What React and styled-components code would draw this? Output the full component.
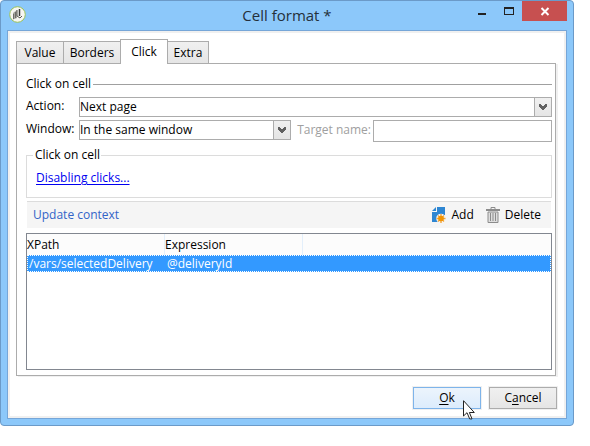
import React from "react";
import styled, { createGlobalStyle } from "styled-components";

const GlobalStyle = createGlobalStyle`
  * { box-sizing: border-box; }
  body {
    margin: 0;
    background: #fff;
    color: #000;
    font: 12px/16px "Open Sans", "Noto Sans", sans-serif;
  }
  button, input, select { font: inherit; color: inherit; margin: 0; }
`;

const Desktop = styled.div`
  padding: 0 16px 20px 0;
`;

const Window = styled.main`
  padding: 0 6px 6px;
  border: 1px solid #6b9ac8;
  border-radius: 4px;
  background: #8cc8fa;
`;

const TitleBar = styled.header`
  display: grid;
  grid-template-columns: 107px 1fr 107px;
  align-items: start;
  height: 29px;
`;

const AppIcon = styled.svg`
  display: block;
  width: 17px;
  height: 17px;
  margin: 5px 0 0 2px;
`;

const Title = styled.h1`
  margin: 3px 0 0;
  color: #24303a;
  font-size: 15px;
  font-weight: 400;
  line-height: 22px;
  text-align: center;
`;

const WindowButtons = styled.div`
  display: flex;
  justify-content: flex-end;
`;

const WindowButton = styled.button`
  display: block;
  flex: none;
  width: ${(p) => (p.$close ? 45 : 27)}px;
  height: 20px;
  padding: 0;
  border: 0;
  background: ${(p) => (p.$close ? "#c75050" : "transparent")};
  svg { display: block; width: 100%; height: 20px; }
`;

const Client = styled.div`
  padding: 8px 7px 5px;
  border: 1px solid #76a6d8;
  background: #fff;
  box-shadow: inset 0 0 0 2px #f0f0f0;
`;

const Tabs = styled.div`
  display: flex;
  align-items: flex-end;
  height: 24px;
  padding-left: 2px;
`;

const Tab = styled.button`
  width: ${(p) => p.$width}px;
  height: ${(p) => (p.$active ? 25 : 23)}px;
  margin: 0 0 -1px -1px;
  padding: 0 0 ${(p) => (p.$active ? 1 : 0)}px;
  border: 1px solid #acacac;
  border-bottom-width: ${(p) => (p.$active ? 0 : 1)}px;
  background: ${(p) => (p.$active ? "#fff" : "linear-gradient(#f0f0f0, #e5e5e5)")};
  position: relative;
`;

const Panel = styled.section`
  margin: 0 3px 0 1px;
  padding: 12px 3px 5px 9px;
  border: 1px solid #acacac;
  box-shadow: 2px 1px 0 #f0f0f0;
`;

const Heading = styled.h2`
  display: flex;
  align-items: center;
  gap: 2px;
  margin: 0 0 5px;
  font-size: 12px;
  font-weight: 400;
  line-height: 16px;
  &::after {
    content: "";
    flex: 1;
    border-top: 1px solid #a0a0a0;
  }
`;

const Form = styled.div`
  display: grid;
  grid-template-columns: 53px 1fr;
  row-gap: 3px;
`;

const Label = styled.label`
  line-height: 18px;
  white-space: nowrap;
`;

const MutedLabel = styled(Label)`
  line-height: 20px;
  color: #a0a0a0;
  text-align: right;
`;

const FieldPair = styled.div`
  display: grid;
  grid-template-columns: 212fr 78px 179fr;
  column-gap: 2px;
  align-items: start;
`;

const SelectBox = styled.div`
  display: grid;
  grid-template-columns: 1fr 17px;
  height: 20px;
  border: 1px solid #acacac;
  background: #fff;
  svg {
    grid-area: 1 / 2;
    width: 17px;
    height: 18px;
    border-left: 1px solid #acacac;
    background: linear-gradient(#f0f0f0, #e5e5e5);
    pointer-events: none;
  }
`;

const Select = styled.select`
  grid-area: 1 / 1 / 2 / 3;
  width: 100%;
  height: 18px;
  padding: 0;
  border: 0;
  background: transparent;
  line-height: 18px;
  appearance: none;
  outline: 0;
`;

const TextInput = styled.input`
  width: 100%;
  height: 22px;
  border: 1px solid #acacac;
  background: #fff;
`;

const Group = styled.fieldset`
  min-width: 0;
  margin: 5px 0 3px;
  padding: 7px 9px 11px;
  border: 1px solid #dcdcdc;
`;

const Legend = styled.legend`
  height: 16px;
  margin-left: -3px;
  padding: 0 1px 0 2px;
`;

const Link = styled.a`
  color: #0000f0;
  text-underline-offset: 2px;
`;

const Toolbar = styled.div`
  display: flex;
  align-items: center;
  gap: 12px;
  height: 27px;
  margin: 0 1px 5px;
  padding: 0 10px 0 6px;
  border-top: 1px solid #dcdcdc;
  background: #f5f5f5;
`;

const ToolbarTitle = styled.h3`
  flex: 1;
  margin: 0;
  color: #3264c8;
  font-size: 12px;
  font-weight: 400;
`;

const ToolButton = styled.button`
  display: flex;
  align-items: center;
  gap: 5px;
  padding: 0;
  border: 0;
  background: none;
  svg { display: block; width: 14px; height: 16px; }
`;

const ListBox = styled.div`
  height: 137px;
  border: 1px solid #828790;
`;

const Table = styled.table`
  width: 100%;
  border-collapse: separate;
  border-spacing: 0;
  table-layout: fixed;
`;

const Column = styled.col`
  width: ${(p) => (p.$width ? `${p.$width}px` : "auto")};
`;

const HeaderCell = styled.th`
  height: 21px;
  padding: 0;
  border-right: ${(p) => (p.$last ? 0 : 1)}px solid #e3effb;
  background: #fcfcfc;
  font-weight: 400;
  text-align: left;
`;

const Row = styled.tr`
  background: #3399ff;
  color: #fff;
  outline: 1px dotted #fff;
  outline-offset: -1px;
`;

const Cell = styled.td`
  height: 17px;
  padding: 0 0 0 2px;
  line-height: 16px;
`;

const Footer = styled.footer`
  display: flex;
  justify-content: flex-end;
  gap: 8px;
  padding: 11px 2px 4px;
`;

const DialogButton = styled.button`
  position: relative;
  width: 68px;
  height: 22px;
  padding: 0;
  border: 1px solid ${(p) => (p.$primary ? "#7eb4ea" : "#acacac")};
  background: ${(p) =>
    p.$primary ? "linear-gradient(#ecf4fc, #dcecfc)" : "linear-gradient(#f0f0f0, #e5e5e5)"};
  box-shadow: 0 0 0 1px #f0f0f0;
  u { text-underline-offset: 2px; }
`;

const Pointer = styled.svg`
  position: absolute;
  top: 12px;
  left: 49px;
  width: 13px;
  height: 20px;
  pointer-events: none;
`;

function Chevron() {
  return (
    <svg viewBox="0 0 16 18" aria-hidden="true">
      <path d="M4 6h2v1h1v1h2V7h1V6h2v3h-1v1h-1v1H9v1H7v-1H6v-1H5V9H4z" fill="#606060" />
    </svg>
  );
}

function Dropdown({ id, value }) {
  return (
    <SelectBox>
      <Chevron />
      <Select id={id} defaultValue={value}>
        <option>{value}</option>
      </Select>
    </SelectBox>
  );
}

function AddIcon() {
  return (
    <svg viewBox="0 0 14 16" aria-hidden="true">
      <path d="M5 0h8v8H7v7H0V5h5z" fill="#2e86d2" />
      <path d="M0 4 4 0v4z" fill="#2e86d2" />
      <circle cx="9" cy="11.5" r="4.8" fill="#f5f5f5" />
      <g stroke="#f2a63c" strokeWidth="1.4">
        <path d="M9 7v9M4.500 11.500h9M6 8.500l6 6M12 8.500l-6 6" />
      </g>
      <circle cx="9" cy="11.500" r="2.800" fill="#f29400" />
    </svg>
  );
}

function TrashIcon() {
  return (
    <svg viewBox="0 0 14 16" aria-hidden="true">
      <path d="M5 2.500V.5h4v2" fill="none" stroke="#8c8c8c" />
      <path d="M0 2h14v2H0z" fill="#8c8c8c" />
      <path d="M2 5h10v10.500H2z" fill="#dedede" stroke="#8c8c8c" />
      <path d="M4.500 6v8M7 6v8M9.500 6v8" stroke="#8c8c8c" />
    </svg>
  );
}

export default function App() {
  return (
    <Desktop>
      <GlobalStyle />
      <Window>
        <TitleBar>
          <AppIcon viewBox="0 0 17 17" aria-hidden="true">
            <circle cx="8.500" cy="8.500" r="7.800" fill="#f6f6f2" stroke="#9cc254" />
            <path d="M4 7l4-3v8l-4 1.500z" fill="#a6a6a0" />
            <path d="M4.500 8v5M6.500 6v6" stroke="#6c6c68" />
            <path d="M10.500 3v7" stroke="#3b3b38" strokeWidth="1.500" />
            <path d="M8 4v6l3 2 2-2" fill="none" stroke="#55554f" />
          </AppIcon>
          <Title>Cell format *</Title>
          <WindowButtons>
            <WindowButton aria-label="Minimize">
              <svg viewBox="0 0 27 20"><path d="M10 12h8v2h-8z" fill="#222" /></svg>
            </WindowButton>
            <WindowButton aria-label="Maximize">
              <svg viewBox="0 0 27 20"><path d="M9 6h10v8H9zM10 8v5h8V8z" fill="#222" fillRule="evenodd" /></svg>
            </WindowButton>
            <WindowButton $close aria-label="Close">
              <svg viewBox="0 0 45 20"><path d="M19.500 7l7 7M26.500 7l-7 7" stroke="#fff" strokeWidth="2" /></svg>
            </WindowButton>
          </WindowButtons>
        </TitleBar>
        <Client>
          <Tabs role="tablist">
            <Tab role="tab" aria-selected="false" $width={48}>Value</Tab>
            <Tab role="tab" aria-selected="false" $width={58}>Borders</Tab>
            <Tab role="tab" aria-selected="true" $width={48} $active>Click</Tab>
            <Tab role="tab" aria-selected="false" $width={42}>Extra</Tab>
          </Tabs>
          <Panel>
            <Heading>Click on cell</Heading>
            <Form>
              <Label htmlFor="action">Action:</Label>
              <Dropdown id="action" value="Next page" />
              <Label htmlFor="window">Window:</Label>
              <FieldPair>
                <Dropdown id="window" value="In the same window" />
                <MutedLabel htmlFor="target">Target name:</MutedLabel>
                <TextInput id="target" disabled />
              </FieldPair>
            </Form>
            <Group>
              <Legend>Click on cell</Legend>
              <Link href="#disabling-clicks">Disabling clicks...</Link>
            </Group>
            <Toolbar>
              <ToolbarTitle>Update context</ToolbarTitle>
              <ToolButton><AddIcon />Add</ToolButton>
              <ToolButton><TrashIcon />Delete</ToolButton>
            </Toolbar>
            <ListBox>
              <Table>
                <colgroup>
                  <Column $width={138} />
                  <Column $width={138} />
                  <Column />
                </colgroup>
                <thead>
                  <tr>
                    <HeaderCell>XPath</HeaderCell>
                    <HeaderCell>Expression</HeaderCell>
                    <HeaderCell $last />
                  </tr>
                </thead>
                <tbody>
                  <Row>
                    <Cell>/vars/selectedDelivery</Cell>
                    <Cell>@deliveryId</Cell>
                    <Cell />
                  </Row>
                </tbody>
              </Table>
            </ListBox>
          </Panel>
          <Footer>
            <DialogButton $primary>
              <u>O</u>k
              <Pointer viewBox="0 0 13 20" aria-hidden="true">
                <path d="M.5.700v15.300l3.500-3.300 2.700 6.200h2.300l-2.600-6.400h4.900z" fill="#fff" stroke="#222" />
              </Pointer>
            </DialogButton>
            <DialogButton>C<u>a</u>ncel</DialogButton>
          </Footer>
        </Client>
      </Window>
    </Desktop>
  );
}
